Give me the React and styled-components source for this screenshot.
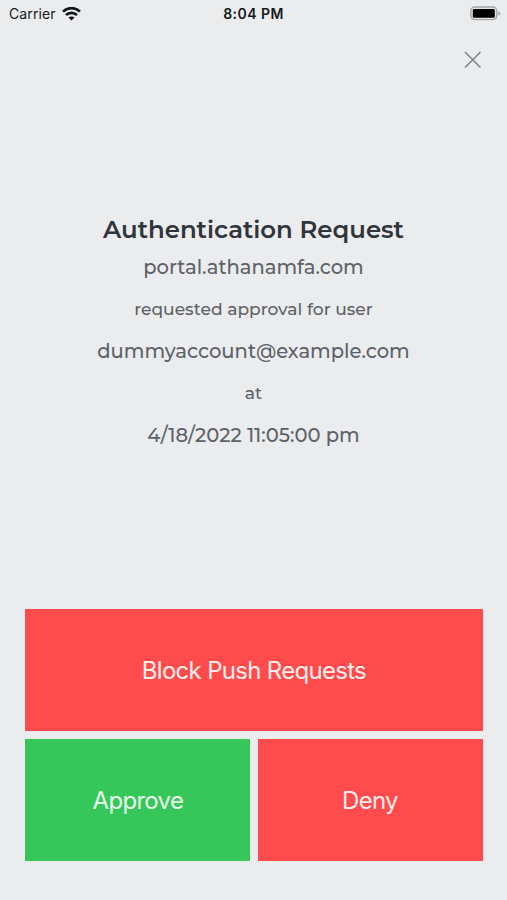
import React from "react";
import styled, { createGlobalStyle } from "styled-components";

const GlobalStyle = createGlobalStyle`
  *, *::before, *::after { box-sizing: border-box; }
  body { margin: 0; background: #ebecee; }
`;

const Screen = styled.main`
  display: flex;
  flex-direction: column;
  width: 100%;
  max-width: 507px;
  height: 900px;
  overflow: hidden;
  background: #ebecee;
  font-family: Inter, "Liberation Sans", sans-serif;
`;

const StatusBar = styled.header`
  display: grid;
  grid-template-columns: 1fr auto 1fr;
  align-items: center;
  height: 27px;
  padding: 0 6px 0 9px;
  color: #16181b;
`;

const Carrier = styled.div`
  display: flex;
  align-items: center;
  gap: 6px;
  font-size: 14px;
  line-height: 20px;
  letter-spacing: 0.1px;
`;

const Clock = styled.time`
  margin-left: -3px;
  font-size: 14px;
  font-weight: 600;
  line-height: 20px;
  letter-spacing: 0.45px;
`;

const Battery = styled.svg`
  display: block;
  justify-self: end;
`;

const TopBar = styled.nav`
  display: flex;
  justify-content: flex-end;
  height: 66px;
  padding: 24px 25px 0 0;
`;

const CloseButton = styled.button`
  display: block;
  width: 18px;
  height: 18px;
  padding: 0;
  border: 0;
  background: none;
  color: #7c8087;
`;

const Details = styled.section`
  display: flex;
  flex-direction: column;
  align-items: center;
  flex: 1;
  padding-top: 120px;
  text-align: center;
  white-space: nowrap;
`;

const Title = styled.h1`
  margin: 0;
  font-family: Montserrat, Inter, sans-serif;
  font-size: 24.4px;
  font-weight: 600;
  line-height: 33px;
  color: #30353b;
`;

const Line = styled.p`
  margin: 0;
  font-family: Montserrat, Inter, sans-serif;
  font-size: ${({ $small }) => ($small ? 17.1 : 19.55)}px;
  font-weight: 500;
  line-height: 42px;
  color: #5d6269;
`;

const Actions = styled.footer`
  display: grid;
  grid-template-columns: 225px 225px;
  grid-template-rows: 122px 122px;
  justify-content: space-between;
  row-gap: 8px;
  padding: 0 24.5px 39px 25.4px;
`;

const ActionButton = styled.button`
  grid-column: ${({ $wide }) => ($wide ? "1 / -1" : "auto")};
  padding: 2px 0 0;
  border: 0;
  background: ${({ $tone }) => ($tone === "approve" ? "#36c75a" : "#ff4b4b")};
  color: ${({ $tone }) => ($tone === "approve" ? "#e9faed" : "#ffeded")};
  font-family: Inter, "Liberation Sans", sans-serif;
  font-size: 24px;
  font-weight: 400;
  line-height: 30px;
  letter-spacing: -0.7px;
`;

const WifiIcon = () => (
  <svg width="19" height="14" viewBox="0 0 19 14" fill="none" stroke="#111315" strokeWidth="2.7">
    <path d="M1 4.6C5.8 0 13.2 0 18 4.6" />
    <path d="M4 8c3.1-2.9 7.9-2.9 11 0" />
    <path d="M6.5 10.6c1.7-1.6 4.3-1.6 6 0L9.5 13.6Z" fill="#111315" stroke="none" />
  </svg>
);

const BatteryIcon = () => (
  <Battery width="31" height="15" viewBox="0 0 31 15">
    <rect x="0.8" y="1" width="26" height="12.6" rx="4" fill="#e3e4e6" stroke="#a4a6a8" strokeWidth="1.4" />
    <rect x="2.8" y="3" width="22" height="8.8" rx="1.4" fill="#000" />
    <path d="M28.4 5.2c2.5 1 2.5 3.6 0 4.6Z" fill="#a4a6a8" />
  </Battery>
);

const CloseIcon = () => (
  <svg width="18" height="18" viewBox="0 0 18 18" fill="none" stroke="currentColor" strokeWidth="1.5">
    <path d="M1 1l15.5 15.5M16.5 1L1 16.5" />
  </svg>
);

export default function App() {
  return (
    <>
      <GlobalStyle />
      <Screen>
        <StatusBar>
          <Carrier>Carrier <WifiIcon /></Carrier>
          <Clock>8:04 PM</Clock>
          <BatteryIcon />
        </StatusBar>
        <TopBar>
          <CloseButton aria-label="Close"><CloseIcon /></CloseButton>
        </TopBar>
        <Details>
          <Title>Authentication Request</Title>
          <Line>portal.athanamfa.com</Line>
          <Line $small>requested approval for user</Line>
          <Line>dummyaccount@example.com</Line>
          <Line $small>at</Line>
          <Line>4/18/2022 11:05:00 pm</Line>
        </Details>
        <Actions>
          <ActionButton $wide>Block Push Requests</ActionButton>
          <ActionButton $tone="approve">Approve</ActionButton>
          <ActionButton>Deny</ActionButton>
        </Actions>
      </Screen>
    </>
  );
}
